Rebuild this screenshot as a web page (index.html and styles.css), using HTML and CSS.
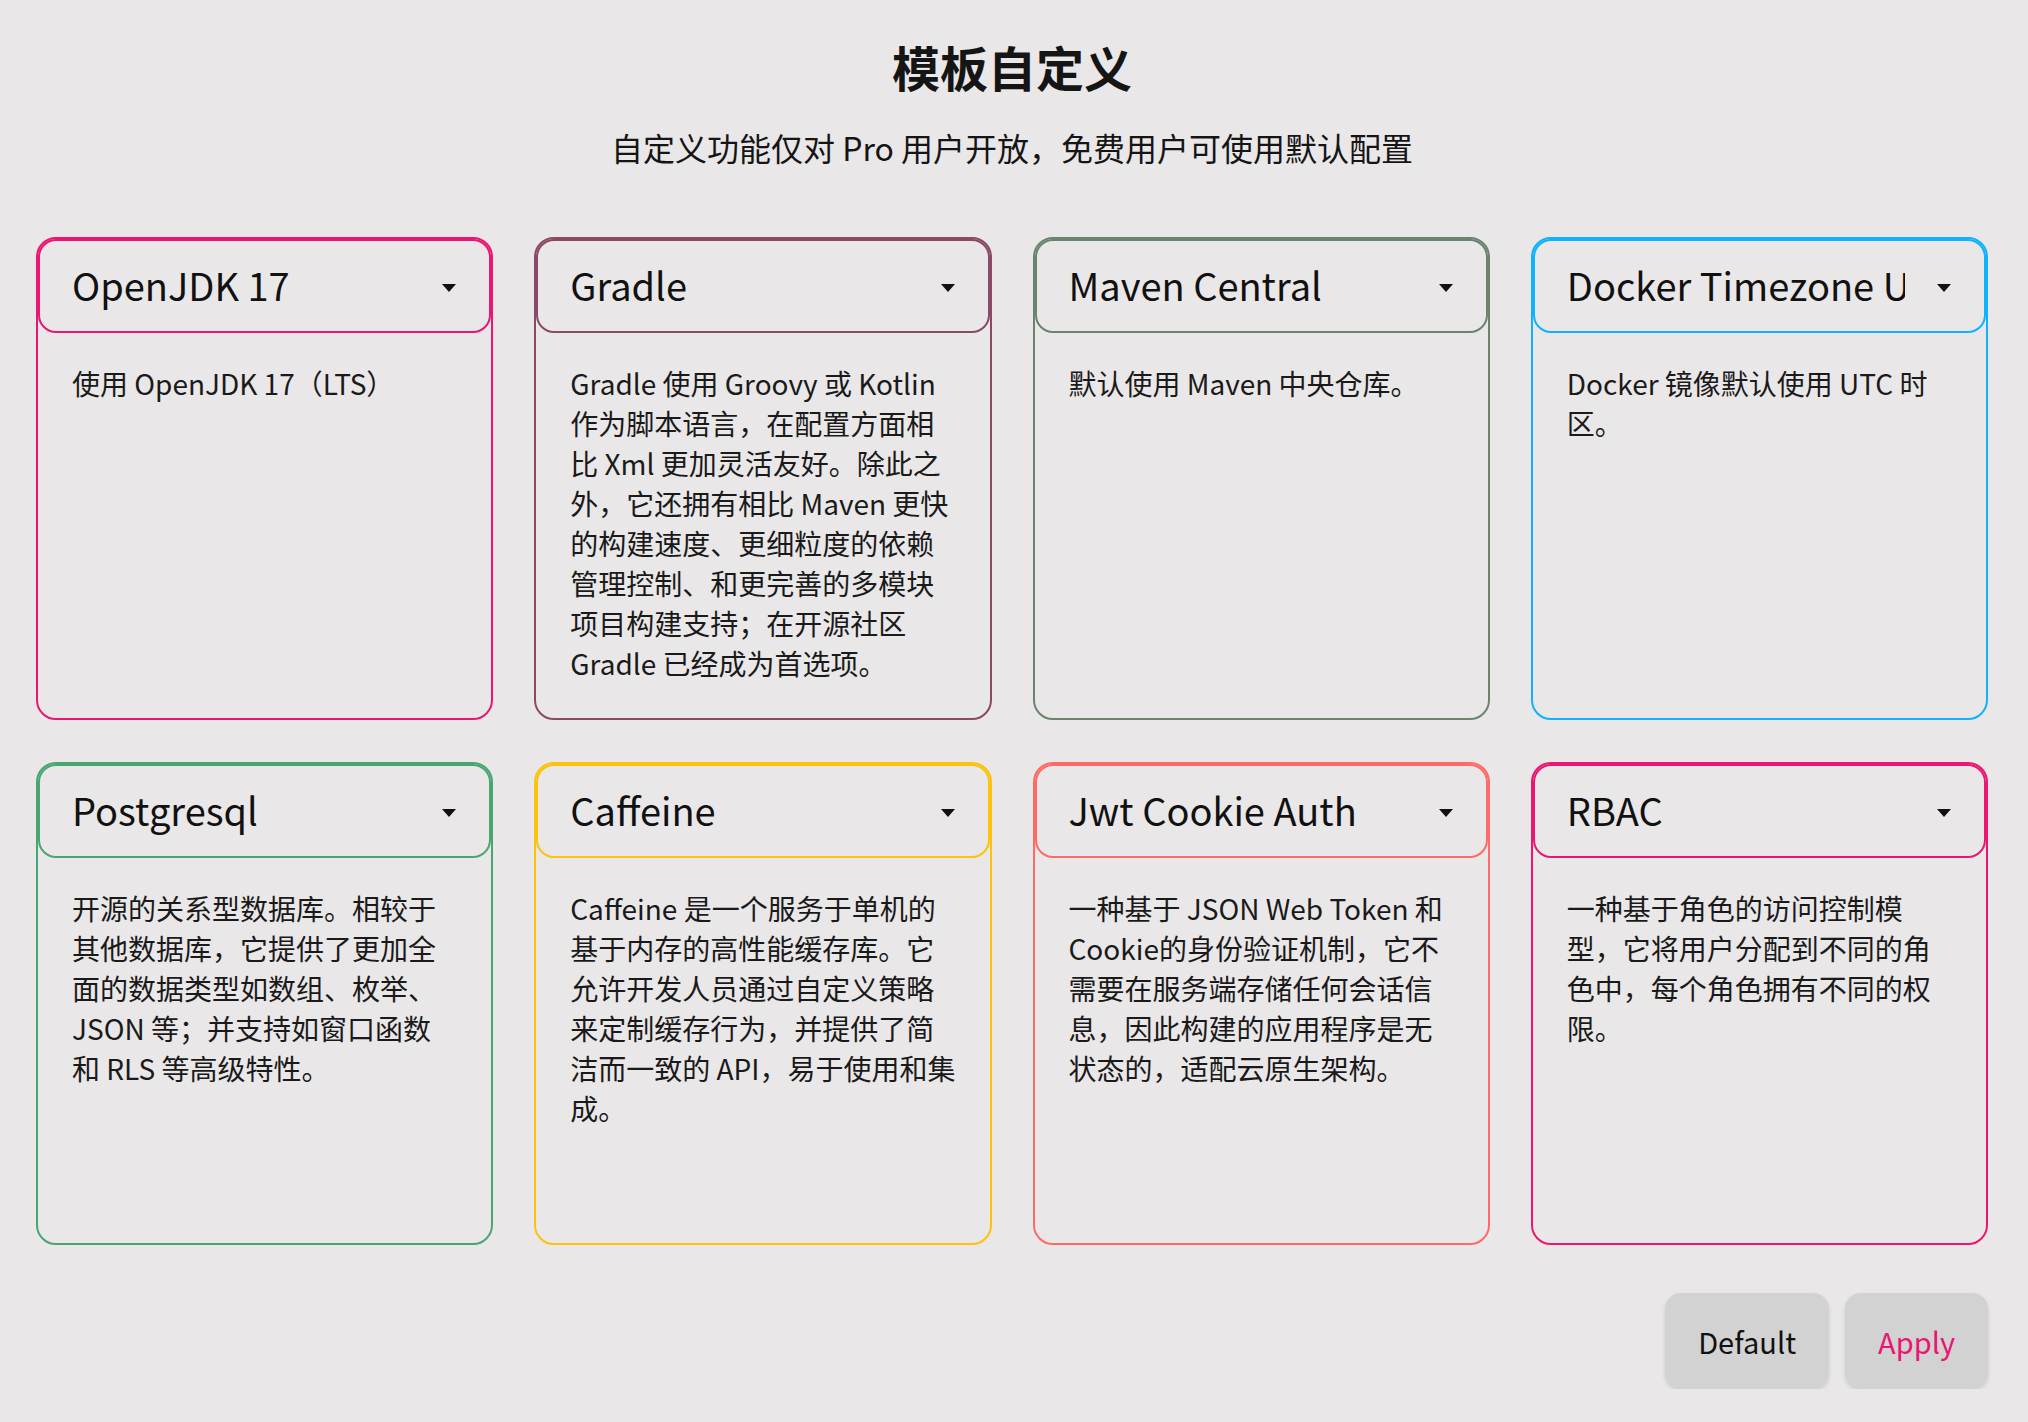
FILE: index.html
```html
<!DOCTYPE html>
<html lang="zh-CN">
<head>
<meta charset="utf-8">
<title>模板自定义</title>
<link rel="stylesheet" href="styles.css">
</head>
<body>
<div class="page">
  <h1 class="title">模板自定义</h1>
  <p class="subtitle">自定义功能仅对 Pro 用户开放，免费用户可使用默认配置</p>

  <div class="grid">
    <div class="card c-pink">
      <div class="select"><span class="select-value">OpenJDK 17</span><span class="caret"></span></div>
      <p class="desc">使用 OpenJDK 17（LTS）</p>
    </div>
    <div class="card c-mauve">
      <div class="select"><span class="select-value">Gradle</span><span class="caret"></span></div>
      <p class="desc">Gradle 使用 Groovy 或 Kotlin 作为脚本语言，在配置方面相比 Xml 更加灵活友好。除此之外，它还拥有相比 Maven 更快的构建速度、更细粒度的依赖管理控制、和更完善的多模块项目构建支持；在开源社区 Gradle 已经成为首选项。</p>
    </div>
    <div class="card c-sage">
      <div class="select"><span class="select-value">Maven Central</span><span class="caret"></span></div>
      <p class="desc">默认使用 Maven 中央仓库。</p>
    </div>
    <div class="card c-blue">
      <div class="select"><span class="select-value">Docker Timezone Utc</span><span class="caret"></span></div>
      <p class="desc">Docker 镜像默认使用 UTC 时区。</p>
    </div>
    <div class="card c-green">
      <div class="select"><span class="select-value">Postgresql</span><span class="caret"></span></div>
      <p class="desc">开源的关系型数据库。相较于其他数据库，它提供了更加全面的数据类型如数组、枚举、JSON 等；并支持如窗口函数和 RLS 等高级特性。</p>
    </div>
    <div class="card c-amber">
      <div class="select"><span class="select-value">Caffeine</span><span class="caret"></span></div>
      <p class="desc">Caffeine 是一个服务于单机的基于内存的高性能缓存库。它允许开发人员通过自定义策略来定制缓存行为，并提供了简洁而一致的 API，易于使用和集成。</p>
    </div>
    <div class="card c-coral">
      <div class="select"><span class="select-value">Jwt Cookie Auth</span><span class="caret"></span></div>
      <p class="desc">一种基于 JSON Web Token 和 Cookie的身份验证机制，它不需要在服务端存储任何会话信息，因此构建的应用程序是无状态的，适配云原生架构。</p>
    </div>
    <div class="card c-pink">
      <div class="select"><span class="select-value">RBAC</span><span class="caret"></span></div>
      <p class="desc">一种基于角色的访问控制模型，它将用户分配到不同的角色中，每个角色拥有不同的权限。</p>
    </div>
  </div>

  <div class="actions">
    <button class="btn">Default</button>
    <button class="btn btn-apply">Apply</button>
  </div>
</div>
</body>
</html>
```
FILE: styles.css
```css
html, body {
  margin: 0;
  padding: 0;
}
body {
  background: #e9e7e8;
  color: #161616;
  font-family: "Noto Sans CJK SC", "Noto Sans", sans-serif;
}
.page {
  padding: 42px 40px 0 36px;
}
.title {
  margin: 0;
  font-size: 48px;
  line-height: 48px;
  font-weight: 700;
  text-align: center;
  color: #151515;
}
.subtitle {
  margin: 41px 0 0;
  font-size: 32px;
  line-height: 32px;
  text-align: center;
  color: #151515;
}
.grid {
  margin-top: 74px;
  display: grid;
  grid-template-columns: repeat(4, 1fr);
  grid-auto-rows: 483px;
  column-gap: 41px;
  row-gap: 42px;
}
.card {
  border: 2px solid var(--c);
  border-radius: 20px;
  box-sizing: border-box;
  display: flex;
  flex-direction: column;
  min-width: 0;
}
.c-pink { --c: #ea1672; }
.c-mauve { --c: #8a4964; }
.c-sage { --c: #6a8470; }
.c-blue { --c: #0fb3fd; }
.c-green { --c: #47a672; }
.c-amber { --c: #fdc20c; }
.c-coral { --c: #fe6a66; }

.select {
  height: 94px;
  box-sizing: border-box;
  border: 2px solid var(--c);
  border-radius: 18px;
  display: flex;
  align-items: center;
  padding: 0 33px 0 32px;
}
.select-value {
  flex: 1;
  min-width: 0;
  overflow: hidden;
  white-space: nowrap;
  text-overflow: clip;
  font-size: 38px;
  line-height: 60px;
  height: 60px;
  color: #111;
  margin-top: -2px;
}
.caret {
  margin-left: 32px;
  width: 0;
  height: 0;
  border-left: 7.5px solid transparent;
  border-right: 7.5px solid transparent;
  border-top: 8px solid #111;
  flex: none;
  margin-top: 4px;
}
.desc {
  margin: 0;
  padding: 30px 34px 0 34px;
  font-size: 28px;
  line-height: 40px;
  color: #1a1a1a;
}
.actions {
  margin-top: 48px;
  display: flex;
  justify-content: flex-end;
  gap: 16px;
}
.btn {
  height: 96px;
  padding: 0 33px;
  border: none;
  border-radius: 16px;
  background: #d2d2d2;
  box-shadow: 0 2px 4px rgba(0, 0, 0, 0.12);
  font-family: "Noto Sans CJK SC", "Noto Sans", sans-serif;
  font-size: 29px;
  color: #111;
  cursor: pointer;
}
.btn-apply {
  color: #ea1672;
}
```
